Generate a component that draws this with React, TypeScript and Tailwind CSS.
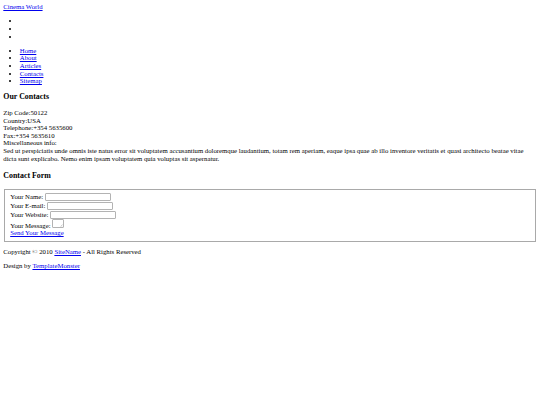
const NAV = ["Home", "About", "Articles", "Contacts", "Sitemap"];

const FIELDS = ["Your Name:", "Your E-mail:", "Your Website:"];

function Link({ children }: { children: React.ReactNode }) {
  return (
    <a href="#" className="text-[#0000ee] underline underline-offset-[0.5px]">
      {children}
    </a>
  );
}

export default function App() {
  return (
    <div className="min-h-[405px] bg-white p-[3.3px] font-['Liberation_Serif',serif] text-[6.75px] leading-[7.6px] text-black">
      <div>
        <Link>Cinema World</Link>
      </div>

      {/* empty menu */}
      <ul className="my-[6.6px] list-disc pl-[16.5px]">
        <li>&nbsp;</li>
        <li>&nbsp;</li>
        <li>&nbsp;</li>
      </ul>

      <ul className="my-[6.6px] list-disc pl-[16.5px]">
        {NAV.map((n) => (
          <li key={n}>
            <Link>{n}</Link>
          </li>
        ))}
      </ul>

      <h3 className="my-[7.7px] text-[7.9px] font-bold leading-[8.9px]">Our Contacts</h3>
      <p className="my-[7.7px]">
        Zip Code:50122
        <br />
        Country:USA
        <br />
        Telephone:+354 5635600
        <br />
        Fax:+354 5635610
        <br />
        Miscellaneous info:
        <br />
        Sed ut perspiciatis unde omnis iste natus error sit voluptatem accusantium doloremque laudantium, totam rem
        aperiam, eaque ipsa quae ab illo inventore veritatis et quasi architecto beatae vitae dicta sunt explicabo.
        Nemo enim ipsam voluptatem quia voluptas sit aspernatur.
      </p>

      <h3 className="mb-[7.7px] mt-[10.2px] text-[7.9px] font-bold leading-[8.9px]">Contact Form</h3>
      <form>
        <fieldset className="mx-[0.8px] border border-[#a9a9a9] px-[5.1px] pb-[3.8px] pt-[2.2px]">
          {FIELDS.map((f) => (
            <div key={f} className="flex h-[9px] items-center gap-[1.6px]">
              <span>{f}</span>
              <input type="text" className="h-[8px] w-[66px] rounded-[1px] border border-[#b3b3b3] bg-white" />
            </div>
          ))}
          <div className="flex h-[10px] items-end gap-[1.6px]">
            <span>Your Message:</span>
            <div className="relative mb-[1px]">
              <textarea className="block h-[9px] w-[12px] resize-none rounded-[1px] border border-[#b3b3b3] bg-white" />
              <svg viewBox="0 0 6 6" className="absolute bottom-[1px] right-[1px] h-[3px] w-[3px]">
                <path d="M5 1 L1 5 M5 3.5 L3.5 5" stroke="#8a8a8a" strokeWidth="0.8" />
              </svg>
            </div>
          </div>
          <div>
            <Link>Send Your Message</Link>
          </div>
        </fieldset>
      </form>

      <p className="my-[6.6px]">
        Copyright © 2010 <Link>SiteName</Link> - All Rights Reserved
      </p>
      <p className="my-[6.6px]">
        Design by <Link>TemplateMonster</Link>
      </p>
    </div>
  );
}
